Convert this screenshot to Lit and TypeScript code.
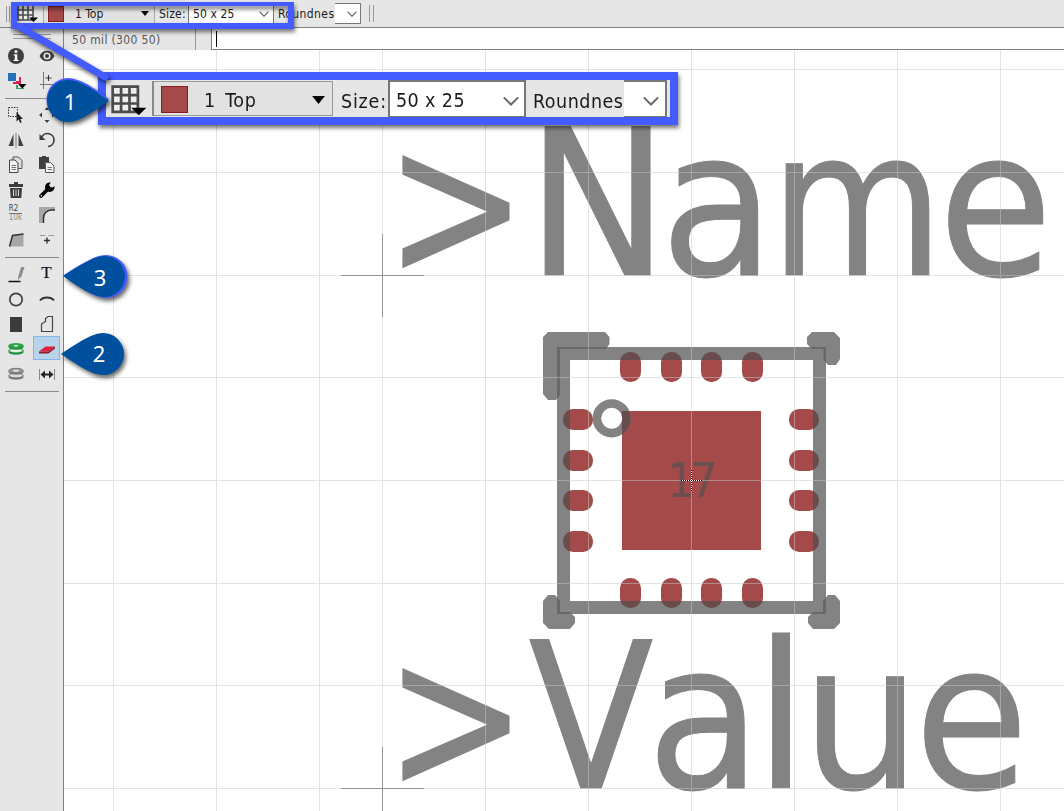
import { LitElement, html, svg, css } from "lit";
import { customElement, property } from "lit/decorators.js";

const INK = "#3f3f3f";

const ICONS: Record<string, any> = {
  info: svg`<circle cx="12" cy="12" r="8" fill="${INK}"/><circle cx="12" cy="7.6" r="1.5" fill="#fff"/><path d="M9.8 10.3H13.3V15.8H14.5V17H9.6V15.8H10.8V11.5H9.8Z" fill="#fff"/>`,
  eye: svg`<path d="M4.5 12C7.5 5 16.500 5 19.500 12C16.500 19 7.500 19 4.500 12Z" fill="${INK}"/><circle cx="12" cy="12" r="3.600" fill="#e6e6e6"/><circle cx="12" cy="12" r="2" fill="${INK}"/>`,
  layers: svg`<rect x="4" y="4" width="8" height="8" fill="#2472b8"/><path d="M12 12H15V8H17V15H9V13H12Z" fill="#d8234f"/><path d="M12 16H14V19H20V20H12Z" fill="#35a565"/><path d="M14 15H22.500L18.300 19.500Z" fill="#000"/>`,
  origin: svg`<path d="M8.500 3V20M5 15.500H20" stroke="#777" fill="none"/><path d="M13.500 6V12M10.500 9H16.500" stroke="#333" fill="none"/>`,
  select: svg`<rect x="4.500" y="4.500" width="9" height="9" fill="none" stroke="#333" stroke-dasharray="1.500 1.200"/><path d="M12.500 9V18.500L14.600 16.600L16.200 20L17.700 19.300L16.200 16H19Z" fill="#222"/>`,
  move: svg`<path d="M12 4L14.500 7H9.500ZM12 20L14.500 17H9.500ZM4 12L7 9.500V14.500ZM20 12L17 9.500V14.500Z" fill="${INK}"/>`,
  mirror: svg`<path d="M9.500 6V18H4.500ZM14.500 6V18H19.500Z" fill="${INK}"/><path d="M12 5V20" stroke="#777"/>`,
  rotate: svg`<path d="M6.500 9.500A6.500 6.500 0 1 1 13 18.500" fill="none" stroke="${INK}" stroke-width="1.700"/><path d="M4.500 6V12H10.500Z" fill="${INK}"/>`,
  copy: svg`<path d="M9 4H14.500L18 7.500V15.500H9Z" fill="#ddd" stroke="#555"/><path d="M5.500 7H11L14 10V19.500H5.500Z" fill="#f2f2f2" stroke="#444"/><path d="M7.500 12.500H12M7.500 14.500H12M7.500 16.500H12" stroke="#777"/>`,
  paste: svg`<path d="M4 4H14V9H10V16H4Z" fill="${INK}"/><path d="M7 3H11V5H7Z" fill="${INK}"/><path d="M10.500 9.500H15.500L19 13V19.500H10.500Z" fill="#f2f2f2" stroke="#555"/><path d="M12.500 14.500H17M12.500 16.500H17" stroke="#777"/>`,
  trash: svg`<path d="M5 6H10V4H14V6H19V9H5Z" fill="${INK}"/><path d="M6 10H18L17.300 20H6.700Z" fill="${INK}"/><path d="M9.500 11.500V18M12 11.500V18M14.500 11.500V18" stroke="#ddd"/>`,
  wrench: svg`<path d="M6 18L13 11" stroke="#000" stroke-width="3.800" stroke-linecap="round"/><path d="M19.500 8.200A4.800 4.800 0 1 1 15.800 4.500L14 7L15.200 9L17.300 9.600Z" fill="#000"/><circle cx="6.300" cy="17.700" r=".8" fill="#fff"/>`,
  fillet: svg`<rect x="4" y="4" width="16" height="16" fill="#aaa6a4"/><path d="M20 7H16.500A8 8 0 0 0 8.500 15V20H20Z" fill="#e6e6e6"/><path d="M20 7H16.500A8 8 0 0 0 8.500 15V20" fill="none" stroke="#333" stroke-width="1.500"/>`,
  slant: svg`<path d="M5.500 18.500L8.500 7.500L19.500 6V18.500Z" fill="#aaa6a4"/><path d="M5.500 18.500L8.500 7.500L19.500 6" fill="none" stroke="#333" stroke-width="1.500"/>`,
  split: svg`<path d="M5 7.500H10.500M13.500 7.500H19" stroke="#999"/><path d="M12 9.500V15.500M9 12.500H15" stroke="#333" stroke-width="1.400"/>`,
  line: svg`<path d="M4.500 19.500H16.500" stroke="#111" stroke-width="1.500"/><path d="M17 5H20.500L17.500 14.500L14 18L14.200 14.500Z" fill="#909090"/>`,
  circle: svg`<circle cx="12" cy="12.500" r="6.200" fill="none" stroke="${INK}" stroke-width="1.700"/>`,
  arc: svg`<path d="M5 13.500C8 9.500 16 9.500 19 13.500" fill="none" stroke="#333" stroke-width="2"/>`,
  rect: svg`<rect x="6" y="5" width="12" height="15" fill="#3b3b3b"/>`,
  polygon: svg`<path d="M6.500 19.500V12L10.500 9.500V6.500L13 4.500H17.500V19.500Z" fill="none" stroke="#444" stroke-width="1.200"/>`,
  via: svg`<path d="M4.500 13V15C4.500 18.500 19.500 18.500 19.500 15V13Z" fill="#1c8a38"/><ellipse cx="12" cy="13.500" rx="7" ry="2.400" fill="#dff0e0" stroke="#1c9a3c"/><path d="M4.500 8.500V10C4.500 13.500 19.500 13.500 19.500 10V8.500Z" fill="#1c8a38"/><ellipse cx="12" cy="8.700" rx="7.500" ry="2.700" fill="#29a845"/><ellipse cx="12" cy="8.700" rx="2.500" ry=".8" fill="#eaf5ea"/>`,
  smd: svg`<path d="M4 14.500L10.500 9.500H20L13.500 14.500Z" fill="#e2213d"/><path d="M4 14.500H13.500L20 9.500V11.500L13.500 16.500H4Z" fill="#8d1c2c"/>`,
  hole: svg`<path d="M4.500 13V15C4.500 18.500 19.500 18.500 19.500 15V13Z" fill="#777"/><ellipse cx="12" cy="13.500" rx="7" ry="2.400" fill="#ddd" stroke="#777"/><path d="M4.500 8.500V10C4.500 13.500 19.500 13.500 19.500 10V8.500Z" fill="#777"/><ellipse cx="12" cy="8.700" rx="7" ry="2.400" fill="#999" stroke="#777"/><ellipse cx="12" cy="8.700" rx="3" ry=".9" fill="#eee"/>`,
  measure: svg`<path d="M4.500 7V18M19.500 7V18" stroke="#888"/><path d="M8 12.500H16" stroke="#222" stroke-width="2"/><path d="M5.500 12.500L10 8.500V16.500ZM18.500 12.500L14 8.500V16.500Z" fill="#222"/>`,
};

const GROUPS: string[][] = [
  ["info", "eye", "layers", "origin"],
  ["select", "move", "mirror", "rotate", "copy", "paste", "trash", "wrench", "values", "fillet", "slant", "split"],
  ["line", "text", "circle", "arc", "rect", "polygon", "via", "smd", "hole", "measure"],
];

@customElement("tool-palette")
class ToolPalette extends LitElement {
  static styles = css`
    :host { display: block; box-sizing: border-box; width: 64px; background: #e6e6e6; border-right: 1px solid #808080; padding-top: 6px; }
    .grip { height: 3px; width: 38px; margin: 0 0 3px 13px; border-top: 1px solid #999; border-bottom: 1px solid #999; }
    .group { display: grid; grid-template-columns: 31px 31px; grid-auto-rows: 25px; place-items: center; padding-bottom: 6px; }
    .rule { height: 1px; width: 54px; margin: 0 0 2px 5px; background: #8a8a8a; }
    .tool { width: 25px; height: 22px; display: grid; place-items: center; border: 1px solid transparent; }
    .tool.on { background: #b9d3ea; border-color: #7db9ea; }
    svg { width: 24px; height: 24px; display: block; }
    .letter { font: 17px/20px "Liberation Serif", serif; color: #111; -webkit-text-stroke: 0.2px #111; }
    .values { font: 8px/8px "DejaVu Sans Condensed", sans-serif; display: grid; }
    .values span:first-child { border-bottom: 1px solid #666; color: #444; }
    .values span:last-child { color: #888; }
  `;
  tool(name: string) {
    if (name === "text") return html`<span class="letter">T</span>`;
    if (name === "values") return html`<span class="values"><span>R2</span><span>10k</span></span>`;
    return html`<svg viewBox="0 0 24 24">${ICONS[name]}</svg>`;
  }
  render() {
    return html`<div class="grip"></div>
      ${GROUPS.map((g) => html`<div class="group">${g.map((n) => html`<div class="tool ${n === "smd" ? "on" : ""}">${this.tool(n)}</div>`)}</div><div class="rule"></div>`)}`;
  }
}

const gridIcon = svg`<rect x="1" y="1" width="15" height="15" fill="#eee"/><path d="M1 1H16V16H1ZM6 1V16M11 1V16M1 6H16M1 11H16" fill="none" stroke="#4c4c4c" stroke-width="1.600"/><path d="M12 13.500H21L16.500 18Z" fill="#000"/>`;
const chevron = html`<svg class="chev" viewBox="0 0 10 6"><path d="M.5 .7L5 5.200L9.500 .7" fill="none" stroke="#666" stroke-width="1.200"/></svg>`;

@customElement("pad-options")
class PadOptions extends LitElement {
  @property({ type: Boolean, reflect: true }) large = false;
  static styles = css`
    :host { display: flex; height: 27px; align-items: center; font: 12px/16px "DejaVu Sans Condensed", sans-serif; color: #1a1a1a; background: #e6e6e6; white-space: nowrap; }
    .handle { width: 2px; height: 16px; border: solid #999; border-width: 0 1px; margin: 0 7px 0 6px; }
    .snap { width: 22px; height: 19px; margin-right: 4px; }
    .layer { box-sizing: border-box; display: flex; align-items: center; width: 112px; height: 20px; padding-left: 4px; border: solid #aaa; border-width: 0 1px; background: #e2e2e2; }
    .swatch { box-sizing: border-box; width: 16px; height: 16px; background: #a44a4a; border: 1px solid #8a1c1c; }
    .name { flex: 1; margin-left: 11px; }
    .down { width: 8px; height: 5px; margin-right: 5px; }
    .label { margin-left: 4px; width: 29px; letter-spacing: 0.2px; }
    .size { box-sizing: border-box; display: flex; align-items: center; justify-content: space-between; width: 86px; height: 21px; padding: 0 4px; background: #fff; border: 1px solid #777; letter-spacing: 0.1px; }
    .round { margin-left: 4px; width: 57px; letter-spacing: 0.4px; }
    .pick { box-sizing: border-box; display: flex; align-items: center; justify-content: center; width: 26px; height: 21px; background: #fff; border: 1px solid #777; border-left: 0; padding-left: 8px; }
    .chev { width: 10px; height: 6px; }
    .tail { width: 3px; height: 17px; border: solid #999; border-width: 0 1px; margin-left: 8px; }
    :host([large]) { height: 37px; font-size: 19.500px; line-height: 26px; letter-spacing: 0.5px; }
    :host([large]) .handle, :host([large]) .tail { display: none; }
    :host([large]) .snap { width: 37px; height: 32px; margin: 4px 4px 0 5px; }
    :host([large]) .layer { width: 181px; height: 35px; padding-left: 7px; border: 1px solid #999; border-left: 2px solid #888; }
    :host([large]) .swatch { width: 27px; height: 27px; margin-top: 1px; }
    :host([large]) .name { margin-left: 16px; padding-top: 4px; word-spacing: 3px; letter-spacing: 0.7px; }
    :host([large]) .down { width: 13px; height: 8px; margin: 2px 7px 0 0; }
    :host([large]) .label { margin-left: 8px; width: 47px; padding-top: 7px; letter-spacing: 0.8px; }
    :host([large]) .size { width: 138px; height: 37px; border-width: 2px 2px 1px; padding: 3px 5px 0 6px; letter-spacing: 0.4px; }
    :host([large]) .round { margin-left: 7px; width: 91px; padding-top: 7px; letter-spacing: 0.5px; }
    :host([large]) .pick { width: 43px; height: 37px; border-width: 2px 2px 1px 0; padding: 3px 0 0 12px; }
    :host([large]) .chev { width: 16px; height: 10px; }
  `;
  render() {
    return html`<div class="handle"></div>
      <svg class="snap" viewBox="0 0 22 19">${gridIcon}</svg>
      <div class="layer"><span class="swatch"></span><span class="name">1 Top</span><svg class="down" viewBox="0 0 8 5"><path d="M0 0H8L4 5Z"/></svg></div>
      <span class="label">Size:</span>
      <div class="size"><span>50 x 25</span>${chevron}</div>
      <span class="round">Roundnes</span>
      <div class="pick">${chevron}</div><div class="tail"></div>`;
  }
}

const VX = [49, 152, 255, 318, 421, 524, 627, 730, 833, 936];
const HY = [19, 122, 225, 327, 430, 533, 635, 738];
const TOPS = [630.5, 671.5, 711.5, 752.5];
const SIDES = [419.5, 460.5, 500.5, 541.5];

// Vector-font glyphs: [character, x, advance width]
type Glyph = [string, number, number];
const NAME: Glyph[] = [["N", 526.5, 142], ["a", 660.5, 114], ["m", 770, 174], ["e", 938.5, 114]];
const VALUE: Glyph[] = [["V", 528.5, 125], ["a", 647, 114], ["l", 755, 52], ["u", 801.5, 119], ["e", 914.5, 114]];

const MARKS = [
  "M548 332H605L609.500 337V344L606 349H560V395L556 400H548L543 394V337Z",
  "M812 332H834L840 338V359L836 365H828L823.500 360V349H812L807 344V337Z",
  "M548 595H555L560 601V612H570L575 617V623L570 629H549L543 623V601Z",
  "M835 595H828L823 601V612H813L808 617V623L813 629H834L840 623V601Z",
];

@customElement("board-canvas")
class BoardCanvas extends LitElement {
  static styles = css`
    :host { display: block; overflow: hidden; background: #fff; }
    svg { display: block; }
    .txt { font-family: "DejaVu Sans Condensed", sans-serif; }
    .big { font-size: 203px; fill: #838383; stroke: #838383; stroke-width: 1px; }
    .arrow { font-size: 208px; }
    .pin { font-size: 48px; fill: #6b4e4e; }
    .red { fill: #a44a4a; }
    .dark { fill: #694c4c; }
    .frame { fill: none; stroke: #838383; stroke-width: 13px; }
    .mark { fill: #838383; }
    .overlap { fill: #686868; }
    .grid { fill: none; stroke: rgba(200, 200, 200, 0.5); shape-rendering: crispEdges; }
    .cross { fill: none; stroke: #949494; shape-rendering: crispEdges; }
  `;
  pads(cls: string) {
    return svg`<g class="${cls}">
      ${TOPS.map((x) => svg`<rect x="${x - 10.5}" y="352" width="21" height="30" rx="10"/><rect x="${x - 10.5}" y="578" width="21" height="30" rx="10"/>`)}
      ${SIDES.map((y) => svg`<rect x="563" y="${y - 10.5}" width="30" height="21" rx="10"/><rect x="789" y="${y - 10.5}" width="30" height="21" rx="10"/>`)}
    </g>`;
  }
  marks(cls: string) {
    return svg`<path class="${cls}" d="${MARKS.join("")}"/>`;
  }
  label(y: number, glyphs: Glyph[]) {
    return svg`<text class="txt big"><tspan class="arrow" x="385" y="${y + 1.5}" textLength="142" lengthAdjust="spacingAndGlyphs">&gt;</tspan>${glyphs.map(
      ([ch, x, w]) => svg`<tspan x="${x}" y="${y}" textLength="${w}" lengthAdjust="spacingAndGlyphs">${ch}</tspan>`
    )}</text>`;
  }
  render() {
    return html`<svg width="1000" height="761" viewBox="64 50 1000 761">
      <defs>
        <clipPath id="ring"><path clip-rule="evenodd" d="M557 347H826V614H557ZM570 360H813V601H570Z"/></clipPath>
        <clipPath id="die"><rect x="622" y="411" width="139" height="139"/></clipPath>
      </defs>
      ${this.label(275, NAME)}
      ${this.label(788, VALUE)}
      ${this.pads("red")}
      <rect class="red" x="622" y="411" width="139" height="139"/>
      <rect class="frame" x="563.5" y="353.5" width="256" height="254"/>
      ${this.marks("mark")}
      <g clip-path="url(#ring)">${this.pads("dark")}${this.marks("overlap")}</g>
      <circle cx="611.7" cy="418.3" r="14.8" fill="none" stroke="#838383" stroke-width="8.6"/>
      <circle cx="611.7" cy="418.3" r="14.8" fill="none" stroke="#694c4c" stroke-width="8.6" clip-path="url(#die)"/>
      <text class="txt pin" y="497" x="667 690">17</text>
      <path class="grid" d="${VX.map((x) => `M${x + 64.5} 50V811`).join("")}${HY.map((y) => `M64 ${y + 50.5}H1064`).join("")}"/>
      <path class="cross" d="M341 275.500H424M382.500 234V317M341 788.500H424M382.500 747V811"/>
      <path d="M681 480.500H702M691.500 470V491" stroke="#fff" shape-rendering="crispEdges"/>
      <path d="M681 480.500H702M691.500 470V491" stroke="#000" stroke-dasharray="1 1" shape-rendering="crispEdges"/>
    </svg>`;
  }
}

@customElement("app-root")
class AppRoot extends LitElement {
  static styles = css`
    :host { display: block; position: relative; width: 1064px; height: 811px; overflow: hidden; background: #fff; }
    .app { display: grid; grid-template: 27px 1px 783px / 64px 1fr; height: 811px; }
    .top { grid-column: 1 / 3; background: #e6e6e6; }
    .edge { grid-column: 1 / 3; background: #808080; }
    .main { display: grid; grid-template-rows: 22px 1fr; }
    .status { display: flex; background: #e6e6e6; font: 12px/24px "DejaVu Sans Condensed", sans-serif; letter-spacing: 0.35px; color: #555; }
    .coords { box-sizing: border-box; width: 132px; height: 22px; padding-left: 8px; border-right: 1px solid #999; white-space: nowrap; }
    .command { box-sizing: border-box; flex: 1; height: 22px; margin-left: 15px; background: #fff; border: solid #808080; border-width: 0 0 1px 1px; padding: 3px 0 0 4px; }
    .caret { width: 1px; height: 16px; background: #000; }
    .frame { position: absolute; box-sizing: border-box; border: 6px solid #445cff; filter: drop-shadow(1px 3px 2px rgba(0, 0, 0, 0.55)); }
    .small { left: 11px; top: 2px; width: 283px; height: 27px; border-top-width: 4px; }
    .zoomed { left: 98px; top: 72px; width: 580px; height: 53px; border-width: 8px; }
    .overlay { position: absolute; left: 0; top: 0; }
    .num { font: 22px "Noto Sans", sans-serif; fill: #fff; text-anchor: middle; }
    .shade { filter: drop-shadow(2px 3px 2px rgba(0, 0, 0, 0.6)); }
  `;
  render() {
    return html`<div class="app">
        <pad-options class="top"></pad-options>
        <div class="edge"></div>
        <tool-palette></tool-palette>
        <div class="main">
          <div class="status"><div class="coords">50 mil (300 50)</div><div class="command"><div class="caret"></div></div></div>
          <board-canvas></board-canvas>
        </div>
      </div>
      <div class="frame small"></div>
      <div class="frame zoomed"><pad-options large></pad-options></div>
      <svg class="overlay" width="700" height="400">
        <path class="shade" d="M20 27L105 77" stroke="#445cff" stroke-width="7" stroke-linecap="round"/>
        <g class="shade">
          <path d="M109 99C96 89 80 78 68 78A21.500 21.500 0 1 0 68 121C80 121 94 110 109 99Z" fill="#445cff"/>
          <path d="M109 101C96 91 80 80 68 80A21 21 0 1 0 68 122C80 122 94 111 109 101Z" fill="#00509d"/>
        </g>
        <g class="shade">
          <path d="M64 275C78 266 94 255 106 255A21.500 21.500 0 0 1 106 298C94 298 78 286 64 275Z" fill="#445cff"/>
          <path d="M63 276C78 267 94 256 104.500 256A20.500 20.500 0 0 1 104.500 297C94 297 78 287 63 276Z" fill="#00509d"/>
        </g>
        <path class="shade" d="M61 354C76 344 92 333 103 333A21 21 0 0 1 103 375C92 375 76 364 61 354Z" fill="#00509d"/>
        <text class="num" x="70" y="110">1</text>
        <text class="num" x="100" y="286">3</text>
        <text class="num" x="99" y="362">2</text>
      </svg>`;
  }
}
